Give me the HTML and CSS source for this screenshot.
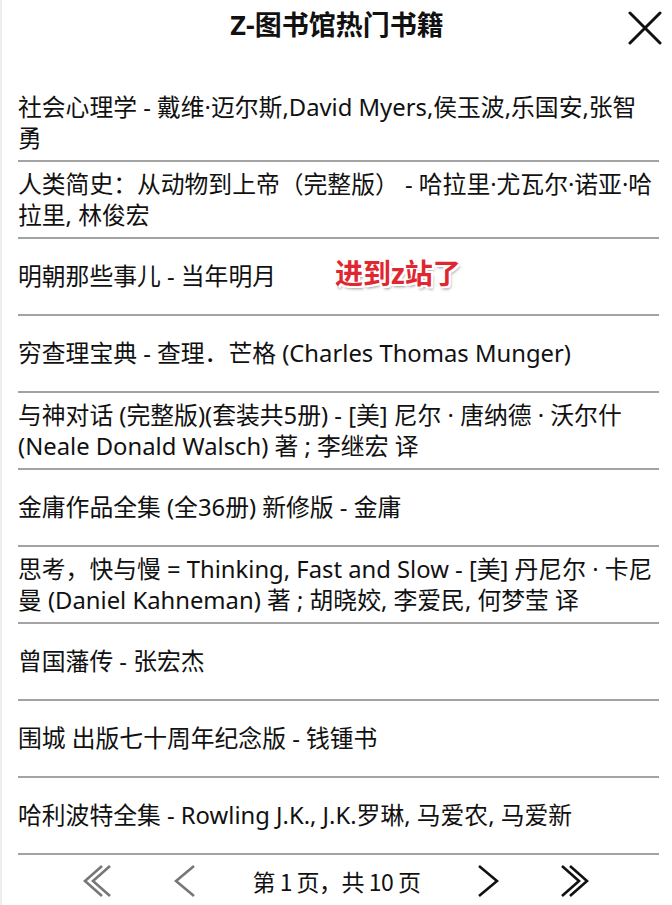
FILE: index.html
```html
<!DOCTYPE html>
<html lang="zh-CN">
<head>
    <meta charset="UTF-8">
    <meta name="viewport" content="width=device-width, initial-scale=1.0">
    <title>Z-图书馆热门书籍</title>
    <link rel="stylesheet" href="styles.css">
</head>
<body>
    <div class="page">
        <div class="header">
            <h1>Z-图书馆热门书籍</h1>
            <a class="close" href="#">
                <svg width="34" height="34" viewBox="0 0 34 34">
                    <path d="M2 2 L32 32 M32 2 L2 32" stroke="#111" stroke-width="3" stroke-linecap="round"/>
                </svg>
            </a>
        </div>

        <ul class="book-list">
            <li>社会心理学 - 戴维·迈尔斯,David Myers,侯玉波,乐国安,张智勇</li>
            <li>人类简史：从动物到上帝（完整版） - 哈拉里·尤瓦尔·诺亚·哈拉里, 林俊宏</li>
            <li>明朝那些事儿 - 当年明月<span class="sticker">进到z站了</span></li>
            <li>穷查理宝典 - 查理．芒格 (Charles Thomas Munger)</li>
            <li>与神对话 (完整版)(套装共5册) - [美] 尼尔 · 唐纳德 · 沃尔什 (Neale Donald Walsch) 著 ; 李继宏 译</li>
            <li>金庸作品全集 (全36册) 新修版 - 金庸</li>
            <li>思考，快与慢 = Thinking, Fast and Slow - [美] 丹尼尔 · 卡尼曼 (Daniel Kahneman) 著 ; 胡晓姣, 李爱民, 何梦莹 译</li>
            <li>曾国藩传 - 张宏杰</li>
            <li>围城 出版七十周年纪念版 - 钱锺书</li>
            <li>哈利波特全集 - Rowling J.K., J.K.罗琳, 马爱农, 马爱新</li>
        </ul>

        <div class="pager">
            <a class="pg first" href="#">
                <svg width="30" height="32" viewBox="0 0 30 32">
                    <path d="M19 1 L2 16 L19 31 M27 1 L10 16 L27 31" fill="none" stroke="#777" stroke-width="2.6"/>
                </svg>
            </a>
            <a class="pg prev" href="#">
                <svg width="22" height="32" viewBox="0 0 22 32">
                    <path d="M20 1 L2 16 L20 31" fill="none" stroke="#777" stroke-width="2.6"/>
                </svg>
            </a>
            <span class="pg-text">第 1 页，共 10 页</span>
            <a class="pg next" href="#">
                <svg width="22" height="32" viewBox="0 0 22 32">
                    <path d="M2 1 L20 16 L2 31" fill="none" stroke="#111" stroke-width="2.6"/>
                </svg>
            </a>
            <a class="pg last" href="#">
                <svg width="30" height="32" viewBox="0 0 30 32">
                    <path d="M3 1 L20 16 L3 31 M11 1 L28 16 L11 31" fill="none" stroke="#111" stroke-width="2.6"/>
                </svg>
            </a>
        </div>
    </div>
</body>
</html>
```

FILE: styles.css
```css
body {
    margin: 0;
    padding: 0;
    background: #fff;
    color: #111;
    font-family: "Noto Sans", "Noto Sans CJK SC", sans-serif;
}
.page {
    width: 672px;
    height: 905px;
    border-left: 2px solid #eee;
    box-sizing: border-box;
    overflow: hidden;
}
.header {
    position: relative;
    height: 46px;
    display: flex;
    align-items: center;
    justify-content: center;
}
.header h1 {
    margin: 0;
    font-size: 27px;
    font-weight: bold;
}
.close {
    position: absolute;
    right: 10px;
    top: 11px;
    display: block;
    line-height: 0;
}
.book-list {
    list-style-type: none;
    margin: 39px 13px 0 16px;
    padding: 0;
}
.book-list li {
    position: relative;
    display: flex;
    align-items: center;
    min-height: 75px;
    border-bottom: 2px solid #a3a3a3;
    font-size: 23.8px;
    line-height: 31px;
}
.sticker {
    position: absolute;
    left: 317px;
    top: 19px;
    font-size: 28px;
    font-weight: bold;
    color: #e02630;
    text-shadow: -2px -2px 0 #fff, 2px -2px 0 #fff, -2px 2px 0 #fff, 2px 2px 0 #fff, 2px 3px 3px #999;
}
.pager {
    display: flex;
    align-items: center;
    height: 52px;
    padding-left: 81px;
}
.pg {
    display: block;
    line-height: 0;
}
.first {
    margin-right: 61px;
}
.pg-text {
    width: 173px;
    margin: 0 54px;
    text-align: center;
    font-size: 23px;
    font-family: "Noto Sans CJK SC", sans-serif;
    letter-spacing: -0.5px;
    white-space: nowrap;
}
.next {
    margin-right: 60px;
}
```
